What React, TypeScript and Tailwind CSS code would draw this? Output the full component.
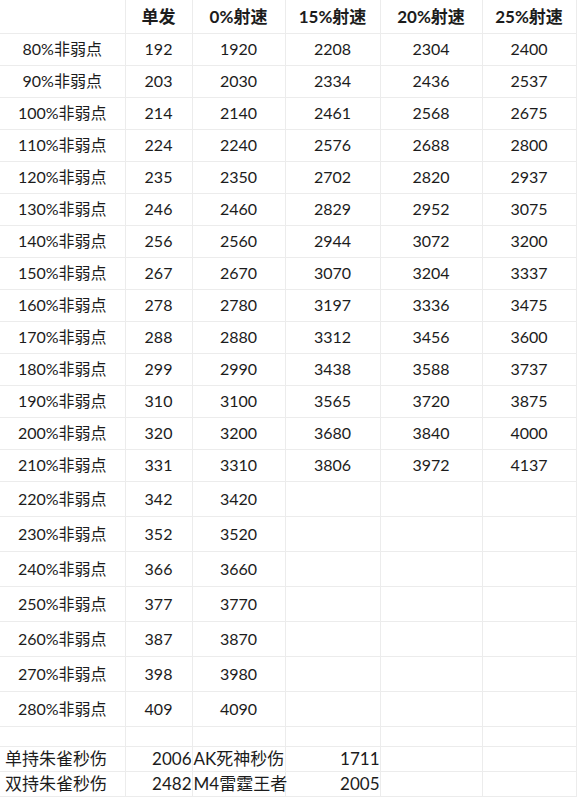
import React from "react";

const rows: [string, number, number, number?, number?, number?][] = [
  ["80%非弱点", 192, 1920, 2208, 2304, 2400],
  ["90%非弱点", 203, 2030, 2334, 2436, 2537],
  ["100%非弱点", 214, 2140, 2461, 2568, 2675],
  ["110%非弱点", 224, 2240, 2576, 2688, 2800],
  ["120%非弱点", 235, 2350, 2702, 2820, 2937],
  ["130%非弱点", 246, 2460, 2829, 2952, 3075],
  ["140%非弱点", 256, 2560, 2944, 3072, 3200],
  ["150%非弱点", 267, 2670, 3070, 3204, 3337],
  ["160%非弱点", 278, 2780, 3197, 3336, 3475],
  ["170%非弱点", 288, 2880, 3312, 3456, 3600],
  ["180%非弱点", 299, 2990, 3438, 3588, 3737],
  ["190%非弱点", 310, 3100, 3565, 3720, 3875],
  ["200%非弱点", 320, 3200, 3680, 3840, 4000],
  ["210%非弱点", 331, 3310, 3806, 3972, 4137],
  ["220%非弱点", 342, 3420],
  ["230%非弱点", 352, 3520],
  ["240%非弱点", 366, 3660],
  ["250%非弱点", 377, 3770],
  ["260%非弱点", 387, 3870],
  ["270%非弱点", 398, 3980],
  ["280%非弱点", 409, 4090],
];

const headers = ["", "单发", "0%射速", "15%射速", "20%射速", "25%射速"];

const cell = "border-r border-b border-[#ececec] p-0 text-center align-middle whitespace-nowrap";

export default function App() {
  return (
    <div
      className="w-[580px] h-[797px] bg-white text-[#1c1c1c] overflow-hidden"
      style={{ fontFamily: 'Lato, "Noto Sans CJK SC", sans-serif' }}
    >
      <table className="table-fixed border-collapse w-[576px]">
        <colgroup>
          <col className="w-[125px]" />
          <col className="w-[67px]" />
          <col className="w-[93px]" />
          <col className="w-[95px]" />
          <col className="w-[102px]" />
          <col className="w-[94px]" />
        </colgroup>
        <tbody>
          <tr className="h-[33px] text-[17px] font-bold">
            {headers.map((h, i) => (
              <td key={i} className={cell}>
                {h}
              </td>
            ))}
          </tr>
          {rows.map((r, idx) => (
            <tr key={r[0]} className={idx < 14 ? "h-[32px] text-[16px]" : "h-[35px] text-[16px]"}>
              {[0, 1, 2, 3, 4, 5].map((c) => (
                <td key={c} className={cell}>
                  {r[c] ?? ""}
                </td>
              ))}
            </tr>
          ))}
          <tr className="h-[20px]">
            {[0, 1, 2, 3, 4, 5].map((c) => (
              <td key={c} className={cell}></td>
            ))}
          </tr>
          <tr className="h-[25px] text-[17px] leading-none">
            <td className={cell + " !text-left pl-[5px]"}>单持朱雀秒伤</td>
            <td className={cell + " !text-right"}>2006</td>
            <td className={cell + " !text-left pl-[1px] overflow-visible"}>AK死神秒伤</td>
            <td className={cell + " !text-right"}>1711</td>
            <td className={cell}></td>
            <td className={cell}></td>
          </tr>
          <tr className="h-[25px] text-[17px] leading-none">
            <td className={cell + " !text-left pl-[5px]"}>双持朱雀秒伤</td>
            <td className={cell + " !text-right"}>2482</td>
            <td className={cell + " !text-left pl-[1px] overflow-visible"}>M4雷霆王者</td>
            <td className={cell + " !text-right"}>2005</td>
            <td className={cell}></td>
            <td className={cell}></td>
          </tr>
        </tbody>
      </table>
    </div>
  );
}
